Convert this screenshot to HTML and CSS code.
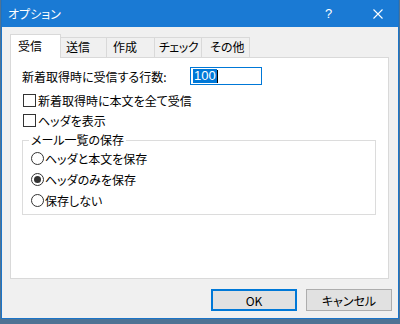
FILE: index.html
```html
<!DOCTYPE html>
<html>
  <head>
    <meta charset="utf-8">
    <title>オプション</title>
    <link rel="stylesheet" href="styles.css">
  </head>
  <body>
    <div class="window">
      <div class="titlebar">
        <span class="title">オプション</span>
        <span class="help">?</span>
        <span class="close">
          <svg width="10" height="10" viewBox="0 0 10 10"><path d="M0.5 0.5 L9.5 9.5 M9.5 0.5 L0.5 9.5" stroke="#fff" stroke-width="1.1" fill="none"/></svg>
        </span>
      </div>
      <div class="client">
        <div class="tabs">
          <div class="tab active">受信</div>
          <div class="tab">送信</div>
          <div class="tab">作成</div>
          <div class="tab">チェック</div>
          <div class="tab">その他</div>
        </div>
        <div class="panel">
          <div class="field">
            <label class="field-label">新着取得時に受信する行数:</label>
            <div class="textbox"><span class="selected">100</span><span class="caret"></span></div>
          </div>
          <div class="row"><span class="check"></span>新着取得時に本文を全て受信</div>
          <div class="row"><span class="check"></span>ヘッダを表示</div>
          <fieldset class="group">
            <legend>メール一覧の保存</legend>
            <div class="row radio-row"><span class="radio"></span>ヘッダと本文を保存</div>
            <div class="row radio-row"><span class="radio checked"></span>ヘッダのみを保存</div>
            <div class="row radio-row"><span class="radio"></span>保存しない</div>
          </fieldset>
        </div>
        <div class="buttons">
          <button class="btn default">OK</button>
          <button class="btn">キャンセル</button>
        </div>
      </div>
    </div>
  </body>
</html>
```

FILE: styles.css
```css
html, body { margin: 0; padding: 0; width: 400px; height: 324px; overflow: hidden; }
body { background: #4f7394; font-family: "Noto Sans CJK JP", "Liberation Sans", sans-serif; font-size: 12px; color: #000; font-feature-settings: "palt"; }

.window { margin-left: 1px; width: 396px; height: 318px; background: #f0f0f0; border: 1px solid #1b74c8; border-top: none; display: flex; flex-direction: column; }

.titlebar { height: 27px; background: #1a7ad4; color: #fff; display: flex; align-items: center; padding-left: 6px; }
.title { flex: 1; font-size: 12px; line-height: 16px; }
.help { width: 12px; font-family: "Liberation Sans", sans-serif; font-size: 13px; margin-right: 36px; }
.close { width: 10px; height: 10px; margin-right: 15px; display: flex; }

.client { flex: 1; padding: 7px 9px 0 8px; display: flex; flex-direction: column; }

.tabs { height: 23px; display: flex; align-items: flex-end; }
.tab { height: 20px; box-sizing: border-box; border: 1px solid #d9d9d9; border-bottom: none; background: #f0f0f0; line-height: 18px; padding-left: 5px; margin-left: -1px; white-space: nowrap; overflow: hidden; }
.tab:nth-child(2) { width: 47px; }
.tab:nth-child(3) { width: 49px; padding-left: 6px; }
.tab:nth-child(4) { width: 48px; padding-left: 4px; letter-spacing: -0.5px; }
.tab:nth-child(5) { width: 49px; padding-left: 8px; }
.tab.active { width: 51px; height: 24px; margin-left: 0; margin-bottom: -1px; background: #fff; position: relative; z-index: 1; padding-left: 7px; line-height: 22px; }

.panel { height: 222px; box-sizing: border-box; background: #fff; border: 1px solid #d9d9d9; padding: 9px 12px 0 11px; }

.field { display: flex; align-items: center; height: 18px; margin-bottom: 5px; }
.field-label { width: 168px; }
.textbox { width: 72px; height: 18px; box-sizing: border-box; border: 1px solid #0078d7; display: flex; align-items: center; padding-left: 2px; }
.selected { background: #0078d7; color: #fff; font-family: "Liberation Sans", sans-serif; font-size: 13px; line-height: 14px; padding: 0 1px; }
.caret { width: 1px; height: 13px; background: #000; }

.row { height: 20px; display: flex; align-items: center; }
.check { width: 13px; height: 13px; box-sizing: border-box; border: 1px solid #333; background: #fff; margin: 0 2px 0 1px; }

.group { margin: 2px 0 0 0; padding: 0 0 3px 8px; border: 1px solid #dcdcdc; }
.group legend { padding: 0 2px; margin-left: -2px; line-height: 16px; }
.radio-row { height: 21px; }
.radio { width: 13px; height: 13px; box-sizing: border-box; border: 1px solid #333; border-radius: 50%; background: #fff; margin-right: 1px; display: flex; align-items: center; justify-content: center; }
.radio.checked::after { content: ""; width: 7px; height: 7px; border-radius: 50%; background: #333; }

.buttons { display: flex; justify-content: flex-end; gap: 9px; margin-top: 10px; margin-right: -3px; }
.btn { width: 86px; height: 22px; box-sizing: border-box; background: #e1e1e1; border: 1px solid #adadad; font-family: inherit; font-size: 12px; font-feature-settings: "palt"; padding: 0; color: #000; }
.btn.default { border: 2px solid #0078d7; }
```
